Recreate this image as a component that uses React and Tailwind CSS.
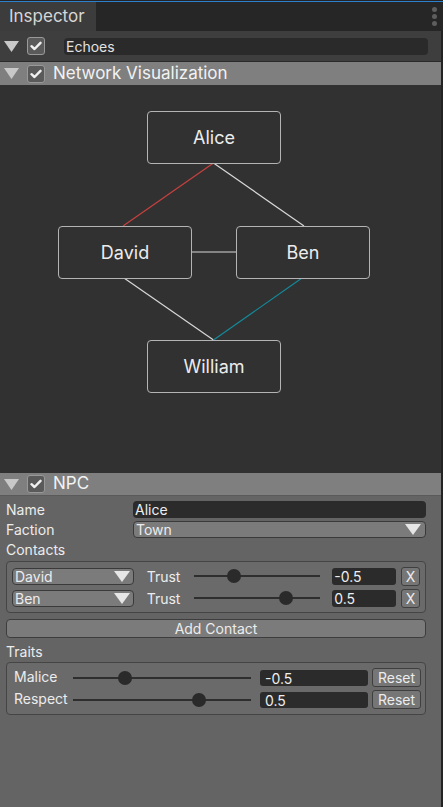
import React from 'react';

const font = { fontFamily: 'Inter, "Noto Sans", sans-serif' };

const Triangle = ({ className = '' }) => (
    <svg width="15" height="11" viewBox="0 0 15 11" className={className}>
        <polygon points="0,0 15,0 7.5,11" fill="#c8c8c8" />
    </svg>
);

const Check = () => (
    <div className="w-[18px] h-[18px] rounded-[3px] border border-[#999] bg-[#5a5a5a] flex items-center justify-center">
        <svg width="12" height="10" viewBox="0 0 12 10">
            <path d="M1.5 5.2 L4.5 8 L10.5 1.8" stroke="#f0f0f0" strokeWidth="2.4" fill="none" strokeLinecap="round" strokeLinejoin="round" />
        </svg>
    </div>
);

const Slider = ({ pos, className = '' }) => (
    <div className={`relative h-[16px] flex items-center ${className}`}>
        <div className="w-full h-[2px] bg-[#2e2e2e]" />
        <div className="absolute w-[14px] h-[14px] rounded-full bg-[#2a2a2a]" style={{ left: `calc(${pos}% - 7px)` }} />
    </div>
);

const DropTri = () => (
    <svg width="16" height="11" viewBox="0 0 16 11">
        <polygon points="0,0 16,0 8,11" fill="#e6e6e6" />
    </svg>
);

const Node = ({ name, x, y }) => (
    <div
        className="absolute w-[134px] h-[53px] rounded-[4px] border border-[#b4b4b4] bg-[#313131] flex items-center justify-center text-[18px] text-[#ececec]"
        style={{ left: x, top: y }}
    >
        {name}
    </div>
);

const Header = ({ title, tall }) => (
    <div className={`${tall ? 'h-[23px]' : 'h-[22px]'} bg-[#7f7f7f] flex items-center pl-[4px] gap-[8px]`}>
        <Triangle />
        <Check />
        <span className="text-[17px] text-[#f2f2f2] leading-none -mt-px">{title}</span>
    </div>
);

const contacts = [
    { name: 'David', pos: 32, value: '-0.5' },
    { name: 'Ben', pos: 73, value: '0.5' },
];

const traits = [
    { name: 'Malice', pos: 29, value: '-0.5' },
    { name: 'Respect', pos: 71, value: '0.5' },
];

export default function App() {
    return (
        <div className="w-[443px] h-[807px] bg-[#232323] flex flex-col overflow-hidden" style={font}>
            <div className="h-px bg-[#242424]" />
            <div className="h-px bg-[#2f7fd0]" />
            {/* tab bar */}
            <div className="h-[29px] flex items-stretch bg-[#262626]">
                <div className="w-[96px] bg-[#3c3c3c] flex items-center pl-[9px] text-[17px] text-[#d6d6d6]">Inspector</div>
                <div className="flex-1" />
                <div className="w-[14px] flex flex-col items-center justify-center gap-[2px] mr-[2px]">
                    <div className="w-[5px] h-[5px] rounded-full bg-[#5e5e5e]" />
                    <div className="w-[5px] h-[5px] rounded-full bg-[#5e5e5e]" />
                    <div className="w-[5px] h-[5px] rounded-full bg-[#5e5e5e]" />
                </div>
            </div>

            <div className="flex-1 flex">
                <div className="w-[441px] flex flex-col">
                    {/* object row */}
                    <div className="h-[30px] bg-[#3e3e3e] flex items-center pl-[4px]">
                        <Triangle />
                        <div className="ml-[8px]"><Check /></div>
                        <div className="ml-[19px] w-[364px] h-[17px] rounded-[4px] bg-[#2a2a2a] flex items-center pl-[2px] text-[14px] text-[#e2e2e2]">Echoes</div>
                    </div>
                    <div className="h-px bg-[#2a2a2a]" />
                    <Header title="Network Visualization" tall />

                    {/* visualization */}
                    <div className="relative h-[388px] bg-[#313131]">
                        <svg width="441" height="388" className="absolute left-0 top-0">
                            <line x1="213.5" y1="78" x2="123" y2="141" stroke="#c9403f" strokeWidth="1.2" />
                            <line x1="213.5" y1="78" x2="304" y2="141" stroke="#d8d8d8" strokeWidth="1.2" />
                            <line x1="191" y1="167" x2="236" y2="167" stroke="#d8d8d8" strokeWidth="1.2" />
                            <line x1="124" y1="193" x2="213.5" y2="255" stroke="#d8d8d8" strokeWidth="1.2" />
                            <line x1="302" y1="193" x2="213.5" y2="255" stroke="#138a9a" strokeWidth="1.2" />
                        </svg>
                        <Node name="Alice" x={147} y={26} />
                        <Node name="David" x={58} y={141} />
                        <Node name="Ben" x={236} y={141} />
                        <Node name="William" x={147} y={255} />
                    </div>

                    <Header title="NPC" />
                    <div className="h-px bg-[#5a5a5a]" />

                    {/* NPC body */}
                    <div className="flex-1 bg-[#646464] px-[6px] pt-[4px] text-[14px] text-[#ececec]">
                        <div className="flex items-center h-[18px]">
                            <span className="w-[127px]">Name</span>
                            <div className="flex-1 h-[17px] rounded-[4px] bg-[#2b2b2b] flex items-center pl-[2px] mr-[9px] text-[#eee]">Alice</div>
                        </div>
                        <div className="flex items-center h-[18px] mt-[2px]">
                            <span className="w-[127px]">Faction</span>
                            <div className="flex-1 h-[17px] rounded-[4px] bg-[#7b7b7b] border border-[#3a3a3a] flex items-center justify-between pl-[2px] pr-[4px] mr-[9px]">
                                <span>Town</span>
                                <DropTri />
                            </div>
                        </div>
                        <div className="h-[18px] mt-[2px] flex items-center">Contacts</div>

                        <div className="mt-[3px] mr-[9px] rounded-[4px] border border-[#454545] bg-[#6a6a6a] px-[5px] pt-[5px] pb-[5px] flex flex-col gap-[4px]">
                            {contacts.map((c) => (
                                <div key={c.name} className="flex items-center h-[18px]">
                                    <div className="w-[122px] h-[17px] rounded-[4px] bg-[#7b7b7b] border border-[#3a3a3a] flex items-center justify-between pl-[2px] pr-[3px]">
                                        <span>{c.name}</span>
                                        <DropTri />
                                    </div>
                                    <span className="ml-[13px] w-[47px]">Trust</span>
                                    <Slider pos={c.pos} className="w-[127px]" />
                                    <div className="ml-[12px] w-[64px] h-[17px] rounded-[3px] bg-[#2b2b2b] flex items-center pl-[2px] text-[#eee]">{c.value}</div>
                                    <div className="ml-[5px] w-[19px] h-[19px] rounded-[3px] border border-[#3f3f3f] bg-[#767676] flex items-center justify-center text-[14px]">X</div>
                                </div>
                            ))}
                        </div>

                        <div className="mt-[6px] mr-[9px] h-[19px] rounded-[4px] border border-[#3d3d3d] bg-[#7b7b7b] flex items-center justify-center">Add Contact</div>
                        <div className="h-[18px] mt-[4px] flex items-center">Traits</div>

                        <div className="mt-[2px] mr-[9px] rounded-[4px] border border-[#454545] bg-[#6a6a6a] pl-[7px] pr-[4px] pt-[5px] pb-[5px] flex flex-col gap-[3px]">
                            {traits.map((t) => (
                                <div key={t.name} className="flex items-center h-[19px]">
                                    <span className="w-[59px] -mt-[3px]">{t.name}</span>
                                    <Slider pos={t.pos} className="w-[178px]" />
                                    <div className="ml-[9px] w-[108px] h-[16px] rounded-[3px] bg-[#2b2b2b] flex items-end pl-[5px] text-[#eee] leading-[15px]">{t.value}</div>
                                    <div className="ml-[4px] w-[49px] h-[19px] rounded-[3px] border border-[#3f3f3f] bg-[#767676] flex items-center justify-center">Reset</div>
                                </div>
                            ))}
                        </div>
                    </div>
                </div>
                <div className="w-[2px] bg-[#232323]" />
            </div>
        </div>
    );
}
